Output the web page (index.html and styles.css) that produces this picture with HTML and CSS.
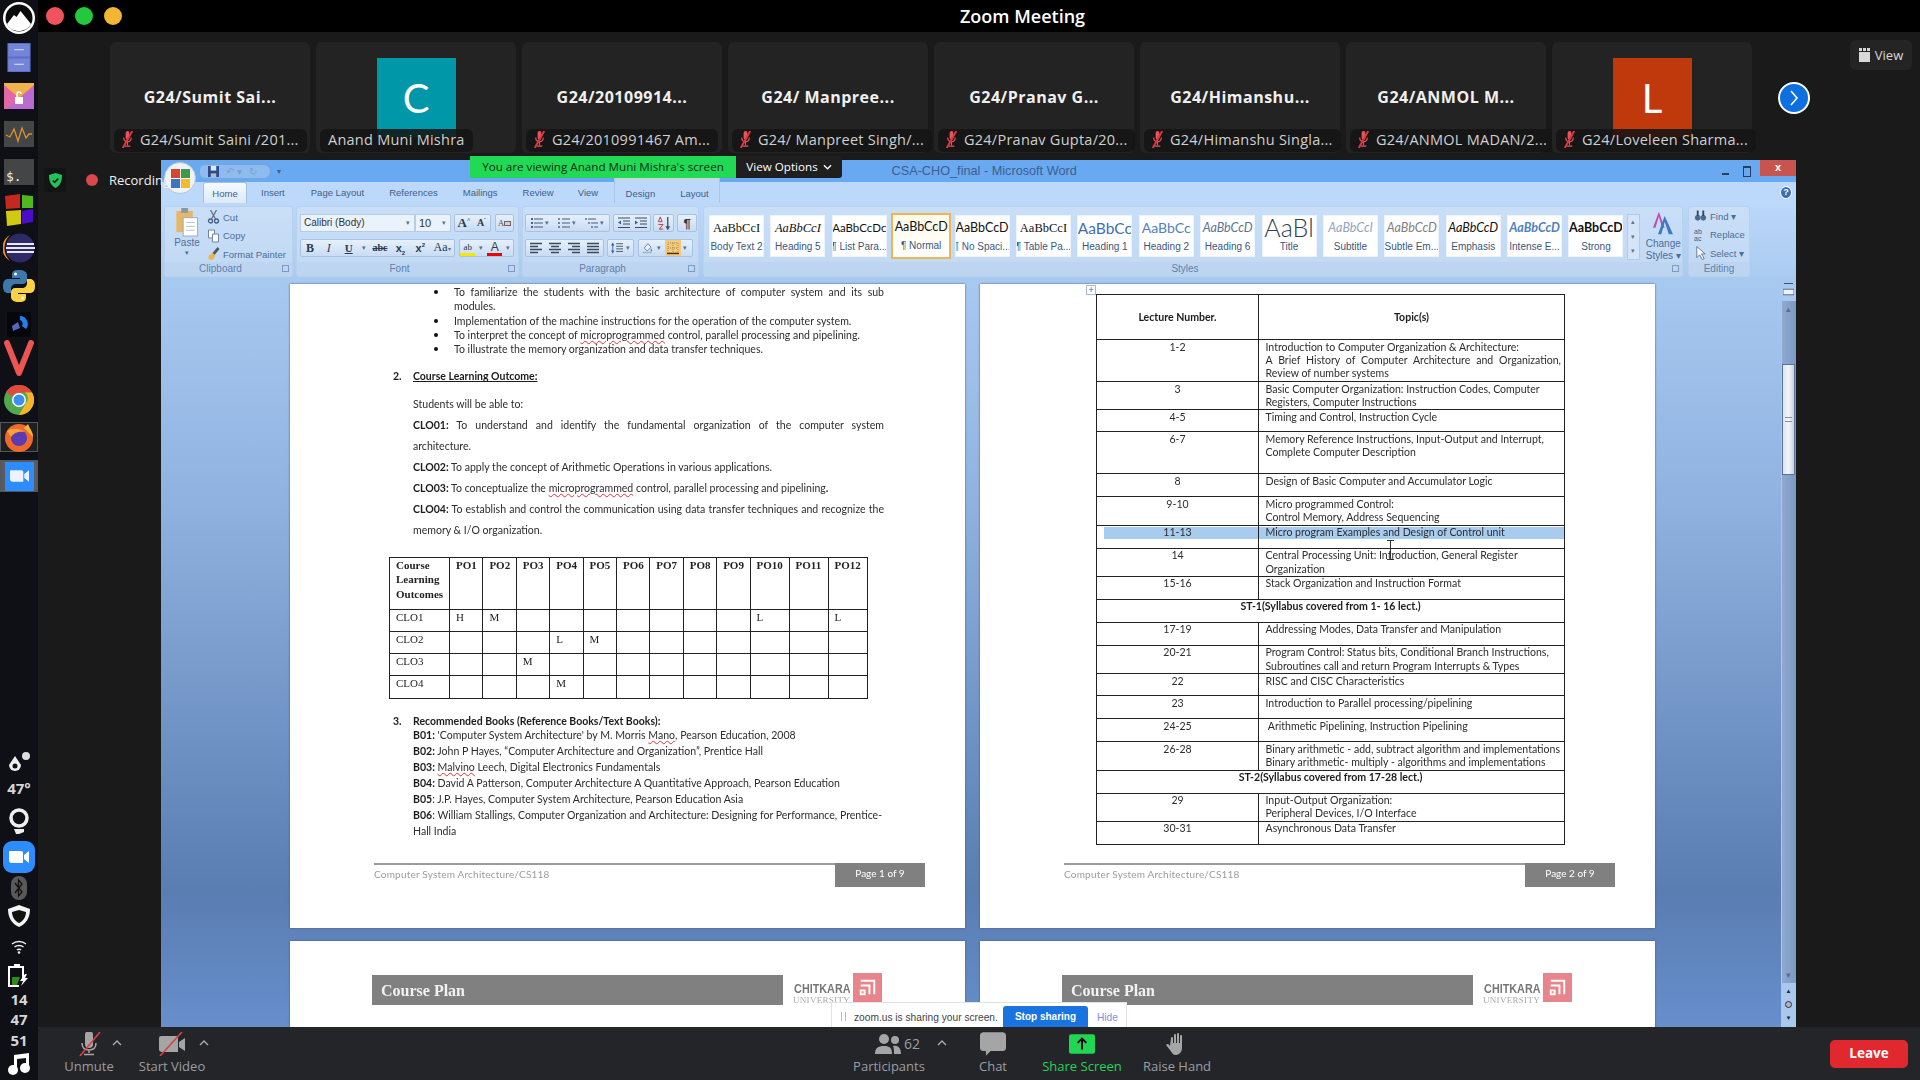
FILE: index.html
```html
<!DOCTYPE html>
<html lang="en">
<head>
<meta charset="utf-8">
<title>Zoom Meeting</title>
<link rel="stylesheet" href="styles.css">
</head>
<body>
<svg class="defs" width="0" height="0" aria-hidden="true">
  <symbol id="mutemic" viewBox="0 0 14 18"><path d="M5 2a2 2 0 0 1 4 0v5a2 2 0 0 1-4 0z" fill="#e2555c"/><path d="M3 7c0 3 1.500 4.500 4 4.500S11 10 11 7M7 11.500V15M4 16h6" fill="none" stroke="#e2555c" stroke-width="1.200"/><path d="M12 0 2 18" stroke="#e8353e" stroke-width="2"/></symbol>
  <symbol id="ulist" viewBox="0 0 14 12"><path d="M4 2h9M4 6h9M4 10h9" stroke="#4a5a70"/><path d="M1 1h2v2H1zM1 5h2v2H1zM1 9h2v2H1z" fill="#3a64a0"/></symbol>
  <symbol id="olist" viewBox="0 0 14 12"><path d="M5 2h8M5 6h8M5 10h8" stroke="#4a5a70"/><path d="M2 1v2M1 6h2M1 10h2" stroke="#3a64a0" stroke-width="1.400"/></symbol>
  <symbol id="mlist" viewBox="0 0 14 12"><path d="M3 2h8M6 6h7M9 10h4" stroke="#4a5a70"/><path d="M1 1v2M4 5v2M7 9v2" stroke="#3a64a0" stroke-width="1.300"/></symbol>
  <symbol id="indent" viewBox="0 0 14 12"><path d="M1 1h12M6 4h7M6 7h7M1 10.500h12" stroke="#3d4a5e"/><path d="M1 3.500 4 5.500 1 7.500z" fill="#2d5ea8"/></symbol>
  <symbol id="outdent" viewBox="0 0 14 12"><path d="M1 1h12M6 4h7M6 7h7M1 10.500h12" stroke="#3d4a5e"/><path d="M4 3.500 1 5.500 4 7.500z" fill="#2d5ea8"/></symbol>
  <symbol id="sort" viewBox="0 0 14 16"><path d="M11 1v13" stroke="#3d4a5e" stroke-width="1.400"/><path d="M8.500 11 11 15l2.500-4z" fill="#3d4a5e"/><path d="M3 1 1 6h4zM1 9h5L2 14h4" fill="none" stroke="#b23a3a"/></symbol>
  <symbol id="left" viewBox="0 0 14 12"><path d="M1 1.500h12M1 4.500h8M1 7.500h12M1 10.500h8" stroke="#3d4a5e" stroke-width="1.300"/></symbol>
  <symbol id="center" viewBox="0 0 14 12"><path d="M1 1.500h12M3 4.500h8M1 7.500h12M3 10.500h8" stroke="#3d4a5e" stroke-width="1.300"/></symbol>
  <symbol id="right" viewBox="0 0 14 12"><path d="M1 1.500h12M5 4.500h8M1 7.500h12M5 10.500h8" stroke="#3d4a5e" stroke-width="1.300"/></symbol>
  <symbol id="justify" viewBox="0 0 14 12"><path d="M1 1.500h12M1 4.500h12M1 7.500h12M1 10.500h12" stroke="#3d4a5e" stroke-width="1.300"/></symbol>
  <symbol id="spacing" viewBox="0 0 16 14"><path d="M7 2h8M7 5h8M7 8h8M7 11h8" stroke="#3d4a5e"/><path d="M3 1v12" stroke="#2d5ea8"/><path d="m1 4 2-3 2 3zM1 10l2 3 2-3z" fill="#2d5ea8"/></symbol>
  <symbol id="shade" viewBox="0 0 16 16"><path d="M8 2 3 8l4 4 5-5z" fill="#eef3f8" stroke="#55697f"/><path d="M12 8c1 2 2 3 1.500 4s-2 .5-2-.5z" fill="#4a86c8"/><path d="M1 14h12" stroke="#9eb3c8" stroke-width="2"/></symbol>
  <symbol id="border" viewBox="0 0 16 16"><path d="M0 0h16v16H0z" fill="#f7c877"/><path d="M3 3h10v10H3z" fill="none" stroke="#a0894f" stroke-dasharray="1 1"/><path d="M8 3v10M3 8h10" stroke="#a0894f" stroke-dasharray="1 1"/><path d="M2 13.500h12" stroke="#333" stroke-width="1.300"/></symbol>
  <symbol id="chev" viewBox="0 0 10 6"><path d="m1 5 4-4 4 4" fill="none" stroke="#a9abaf" stroke-width="1.400"/></symbol>
  <symbol id="logotile" viewBox="0 0 30 30"><path d="M0 0h30v30H0z" fill="#e8848c"/><path d="M8 8h14v14M8 13h9v9M8 18h4v4H8z" fill="none" stroke="#fff" stroke-width="2"/></symbol>
</svg>

<div class="screen">
  <nav class="dock">
    <svg class="dk dk-logo" viewBox="0 0 32 32"><circle cx="16" cy="16" r="16" fill="#fff"/><circle cx="16" cy="16" r="13.500" fill="#0a0a0a"/><path d="M4 22 11 13l2.500 2 4-6L28 22c-3 5-7.500 7-12 7S6 27 4 22z" fill="#fff"/></svg>
    <svg class="dk dk-files" viewBox="0 0 24 30"><path d="M0 0h24v30H0z" fill="#5d6cc4"/><path d="M1 1h22v13H1zM1 16h22v13H1z" fill="#7484d6"/><path d="M7 7h10M7 22h10" stroke="#dfe4f7" stroke-width="1.200"/></svg>
    <svg class="dk dk-mail" viewBox="0 0 30 26"><path d="M0 0h30v26H0z" fill="#f0b24b"/><path d="M0 2 15 15 30 2v24H0z" fill="#e367a6"/><path d="M30 4v22H2z" fill="#b96bd0"/><path d="M11 14h8v7h-8z" fill="#fff"/><path d="M13 14v-3a2 2 0 0 1 4 0" fill="none" stroke="#fff" stroke-width="1.500"/></svg>
    <svg class="dk dk-mon" viewBox="0 0 30 26"><path d="M0 0h30v26H0z" fill="#434547"/><path d="M2 14 6 16 10 8l4 12 4-13 4 10 3-4h3" fill="none" stroke="#d9912f" stroke-width="1.300"/></svg>
    <div class="dk-term">$.</div>
    <svg class="dk dk-win" viewBox="0 0 30 32"><path d="M1 2 16 0v14L2 15z" fill="#c7281d"/><path d="m18 1 11 1v12H18z" fill="#4fb81f"/><path d="m2 17 15-1v14L3 32z" fill="#d2ca12"/><path d="m18 17 11-2v13l-11 2z" fill="#4a0ec8"/></svg>
    <svg class="dk dk-round" viewBox="0 0 32 32"><circle cx="17" cy="16" r="14.500" fill="#2d2a66"/><path d="M7 3A15 15 0 0 0 7 29 18 18 0 0 1 7 3z" fill="#f0901e"/><path d="M4 12h27M3 16h29M4 20h27" stroke="#e9e8f3" stroke-width="1.800"/></svg>
    <svg class="dk dk-py" viewBox="0 0 32 32"><path d="M16 0c-6 0-7 2-7 5v3h8v1H5c-3 0-5 2-5 7s2 7 5 7h3v-4c0-3 2-5 5-5h7c2 0 4-2 4-4V5c0-3-3-5-8-5z" fill="#3c78aa"/><path d="M16 32c6 0 7-2 7-5v-3h-8v-1h12c3 0 5-2 5-7s-2-7-5-7h-3v4c0 3-2 5-5 5h-7c-2 0-4 2-4 4v5c0 3 3 5 8 5z" fill="#fed142"/><circle cx="12.500" cy="4" r="1.500" fill="#fff"/><circle cx="19.500" cy="28" r="1.500" fill="#fff"/></svg>
    <svg class="dk dk-blk" viewBox="0 0 24 25"><path d="M0 0h24v25H0z" fill="#05070c"/><path d="M13 4a8 8 0 0 1 6 13l-4-3a4 4 0 0 0-2-6z" fill="#1d83ec"/><path d="m5 14 6-4 2 6-7 3z" fill="#4f6bc0"/></svg>
    <svg class="dk dk-viv" viewBox="0 0 30 37"><path d="M3 3 15 33 27 3" fill="none" stroke="#ec5552" stroke-width="6" stroke-linecap="round" stroke-linejoin="round"/></svg>
    <svg class="dk dk-chrome" viewBox="0 0 30 30"><circle cx="15" cy="15" r="15" fill="#53a84d"/><path d="M15 0a15 15 0 0 1 13 7.500H15a7.500 7.500 0 0 0-6.500 3.750L2 7A15 15 0 0 1 15 0z" fill="#e2493c"/><path d="M28 7.500A15 15 0 0 1 15 30l6.500-11.250A7.500 7.500 0 0 0 21 7.500z" fill="#f7b32b"/><circle cx="15" cy="15" r="7" fill="#fff"/><circle cx="15" cy="15" r="5.500" fill="#3e8ef0"/></svg>
    <div class="dk-box dk-box-ff"><svg class="dk-ff" viewBox="0 0 30 30"><circle cx="15" cy="16" r="14" fill="#ee6a2a"/><path d="M24 2c2 5 5 8 5 13L20 6z" fill="#f9b233"/><circle cx="15" cy="16" r="8" fill="#5a3bb0"/><path d="M3 9c5-3 12-3 18 1-5-1-11 0-14 5z" fill="#f7a23a"/></svg></div>
    <div class="dk-box dk-box-zm"><div class="zm-square"><svg class="zm-cam" viewBox="0 0 20 12"><path d="M1 0h11a2 2 0 0 1 2 2v10H3a3 3 0 0 1-3-3V1a1 1 0 0 1 1-1z" fill="#eef3fb"/><path d="m15 4 5-4v12l-5-4z" fill="#eef3fb"/></svg></div></div>
    <div class="dock-fill"></div>
    <svg class="dk dk-drop" viewBox="0 0 26 24"><path d="M9 6 15 15a6 6 0 1 1-12 0z" fill="#eee"/><circle cx="9" cy="16" r="2.500" fill="#111"/><circle cx="20" cy="6" r="4" fill="#ddd"/></svg>
    <div class="dk-txt">47°</div>
    <svg class="dk dk-bulb" viewBox="0 0 22 28"><circle cx="11" cy="10" r="8" fill="none" stroke="#eee" stroke-width="3.500"/><path d="M6 21h10v3l-5 2H8z" fill="#eee"/></svg>
    <div class="zm-tray"><svg class="zm-cam zm-cam2" viewBox="0 0 20 12"><path d="M1 0h11a2 2 0 0 1 2 2v10H3a3 3 0 0 1-3-3V1a1 1 0 0 1 1-1z" fill="#fff"/><path d="m15 4 5-4v12l-5-4z" fill="#fff"/></svg></div>
    <div class="bt"><svg class="bt-ic" viewBox="0 0 10 20"><path d="M1 5 8 14 4.500 18V2L8 6 1 15" fill="none" stroke="#111" stroke-width="1.300"/></svg></div>
    <svg class="dk dk-shield" viewBox="0 0 24 24"><path d="M12 1 23 5c0 9-4 15-11 18C5 20 1 14 1 5z" fill="#f4f4f4"/><path d="M12 6 19 8c0 5-3 9-7 11-4-2-7-6-7-11z" fill="#111"/></svg>
    <svg class="dk dk-wifi" viewBox="0 0 16 14"><path d="M1 4c4-3.500 10-3.500 14 0M3.500 7c2.500-2 6.500-2 9 0M6 10c1-1 3-1 4 0" fill="none" stroke="#eee" stroke-width="1.500"/><circle cx="8" cy="12.500" r="1.300" fill="#eee"/></svg>
    <svg class="dk dk-bat" viewBox="0 0 22 24"><path d="M6 0h6v2h4v13h-2V4H2v17h9v2H0V2h6z" fill="#fff"/><path d="M4 13h8l-3 8H4z" fill="#2f8a1e"/><path d="M17 10l-5 7h3l-2 5 7-8h-3l2-4z" fill="#fff"/></svg>
    <div class="dk-txt dk-clock"><span>14</span><span>47</span><span>51</span></div>
    <svg class="dk dk-music" viewBox="0 0 24 22"><path d="M7 2 22 0v15h-3V5L10 6v11H7z" fill="#fff"/><circle cx="6" cy="17" r="5" fill="#fff"/><circle cx="18" cy="15" r="5" fill="#fff"/></svg>
  </nav>

  <main class="zoom">
    <header class="titlebar">
      <span class="dot dot-r"></span><span class="dot dot-g"></span><span class="dot dot-y"></span>
      <h1 class="title">Zoom Meeting</h1>
    </header>

    <section class="gallery">
      <div class="tile"><span class="tile-name">G24/Sumit Sai...</span><div class="pill"><svg class="pill-mic"><use href="#mutemic"/></svg><span>G24/Sumit Saini /201...</span></div></div>
      <div class="tile"><div class="avatar av-c">C</div><div class="pill"><span>Anand Muni Mishra</span></div></div>
      <div class="tile"><span class="tile-name">G24/20109914...</span><div class="pill"><svg class="pill-mic"><use href="#mutemic"/></svg><span>G24/2010991467 Am...</span></div></div>
      <div class="tile"><span class="tile-name">G24/ Manpree...</span><div class="pill"><svg class="pill-mic"><use href="#mutemic"/></svg><span>G24/ Manpreet Singh/...</span></div></div>
      <div class="tile"><span class="tile-name">G24/Pranav G...</span><div class="pill"><svg class="pill-mic"><use href="#mutemic"/></svg><span>G24/Pranav Gupta/20...</span></div></div>
      <div class="tile"><span class="tile-name">G24/Himanshu...</span><div class="pill"><svg class="pill-mic"><use href="#mutemic"/></svg><span>G24/Himanshu Singla...</span></div></div>
      <div class="tile"><span class="tile-name">G24/ANMOL M...</span><div class="pill"><svg class="pill-mic"><use href="#mutemic"/></svg><span>G24/ANMOL MADAN/2...</span></div></div>
      <div class="tile"><div class="avatar av-l">L</div><div class="pill"><svg class="pill-mic"><use href="#mutemic"/></svg><span>G24/Loveleen Sharma...</span></div></div>
      <div class="next"><svg class="next-ic" viewBox="0 0 10 18"><path d="m2 2 6 7-6 7" fill="none" stroke="#fff" stroke-width="1.600"/></svg></div>
      <div class="viewbtn"><svg class="view-ic" viewBox="0 0 11 14"><path d="M0 0h3v3H0zM4 0h3v3H4zM8 0h3v3H8zM0 4h11v10H0z" fill="#d8d8d8"/></svg><span>View</span></div>
    </section>

    <section class="stage">
      <div class="rec"><span class="rec-shield"><svg class="rec-sh" viewBox="0 0 14 16"><path d="M7 0 14 2c0 7-2 11-7 14C2 13 0 9 0 2z" fill="#21c45a"/><path d="m4 8 2 2 4-4" fill="none" stroke="#0c1a10" stroke-width="1.600"/></svg></span><span class="rec-dot"></span><span class="rec-t">Recording</span></div>
      <div class="banner"><span class="banner-msg">You are viewing Anand Muni Mishra's screen</span><span class="banner-opt">View Options <svg class="banner-ch" viewBox="0 0 10 6"><path d="m1 1 4 4 4-4" fill="none" stroke="#fff" stroke-width="1.400"/></svg></span></div>

      <div class="word">
        <div class="w-title">
          <div class="orb"><span class="orb-q q1"></span><span class="orb-q q2"></span><span class="orb-q q3"></span><span class="orb-q q4"></span></div>
          <div class="qat">
            <svg class="qat-save" viewBox="0 0 12 12"><path d="M0 0h12v12H0z" fill="#2c4a8c"/><path d="M3 0h6v5H3z" fill="#dfe8f5"/><path d="M3 8h6v4H3z" fill="#aebbd0"/></svg>
            <span class="qat-dim">↶ ▾</span><span class="qat-dim">↻</span>
          </div>
          <span class="qat-more">▾</span>
          <span class="w-name">CSA-CHO_final - Microsoft Word</span>
          <span class="w-min"></span><span class="w-max"></span><span class="w-close">x</span>
        </div>
        <div class="w-tabs">
          <span class="tab tab-on">Home</span><span class="tab t-ins">Insert</span><span class="tab t-pl">Page Layout</span><span class="tab t-ref">References</span><span class="tab t-mail">Mailings</span><span class="tab t-rev">Review</span><span class="tab t-view">View</span>
          <span class="ctx"><span class="tab">Design</span><span class="tab">Layout</span></span>
          <span class="help">?</span>
        </div>
        <div class="ribbon">
          <div class="grp g-clip">
            <div class="grp-body clip">
              <div class="paste"><svg class="paste-ic" viewBox="0 0 24 30"><path d="M1 3h17v22H1z" fill="#e7b765"/><path d="M6 0h7v5H6z" fill="#8a97a8"/><path d="M8 10h15v19H8z" fill="#fff" stroke="#9aa8ba"/><path d="M11 15h9M11 19h9M11 23h9" stroke="#b7c3d2"/></svg><span class="paste-t">Paste</span><span class="paste-a">▾</span></div>
              <div class="clip-list">
                <div class="ci"><svg class="ci-ic" viewBox="0 0 12 14"><path d="M3 0l5 9M9 0 4 9" stroke="#667" stroke-width="1.200"/><circle cx="3" cy="11" r="2" fill="none" stroke="#44608c" stroke-width="1.300"/><circle cx="9" cy="11" r="2" fill="none" stroke="#44608c" stroke-width="1.300"/></svg>Cut</div>
                <div class="ci"><svg class="ci-ic" viewBox="0 0 12 14"><path d="M1 1h6v8H1z" fill="#fff" stroke="#6f85a3"/><path d="M5 5h6v8H5z" fill="#fff" stroke="#6f85a3"/></svg>Copy</div>
                <div class="ci"><svg class="ci-ic" viewBox="0 0 12 14"><path d="M5 6 10 0l2 2-5 6z" fill="#555"/><path d="M1 9l4-3 3 3-3 4-4-1z" fill="#e4b94e"/></svg>Format Painter</div>
              </div>
            </div>
            <div class="grp-label">Clipboard<i class="launch"></i></div>
          </div>

          <div class="grp g-font">
            <div class="grp-body tworow">
              <div class="row">
                <span class="combo c-font">Calibri (Body)<b>▾</b></span><span class="combo c-size">10<b>▾</b></span>
                <span class="set s-grow"><span class="gl gl-a">A<sup>^</sup></span><span class="gl gl-a2">A<sup>ˇ</sup></span></span>
                <span class="set s-clear"><span class="gl gl-clear">A<i></i></span></span>
              </div>
              <div class="row">
                <span class="set s-fmt"><span class="gl gl-b">B</span><span class="gl gl-i">I</span><span class="gl gl-u">U</span><span class="gl gl-ar">▾</span><span class="gl gl-s">abc</span><span class="gl gl-x">x<sub>2</sub></span><span class="gl gl-x">x<sup>2</sup></span><span class="gl gl-aa">Aa<small>▾</small></span></span>
                <span class="set s-col"><span class="gl gl-hi">ab</span><span class="gl gl-ar">▾</span><span class="gl gl-fc">A</span><span class="gl gl-ar">▾</span></span>
              </div>
            </div>
            <div class="grp-label">Font<i class="launch"></i></div>
          </div>

          <div class="grp g-para">
            <div class="grp-body tworow">
              <div class="row">
                <span class="set s-list"><svg class="ic"><use href="#ulist"/></svg><b class="ar">▾</b><svg class="ic"><use href="#olist"/></svg><b class="ar">▾</b><svg class="ic"><use href="#mlist"/></svg><b class="ar">▾</b></span>
                <span class="set s-ind"><svg class="ic"><use href="#outdent"/></svg><svg class="ic"><use href="#indent"/></svg></span>
                <span class="set s-one"><svg class="ic"><use href="#sort"/></svg></span>
                <span class="set s-one s-pil"><span class="pil">¶</span></span>
              </div>
              <div class="row">
                <span class="set s-al"><svg class="ic"><use href="#left"/></svg><svg class="ic"><use href="#center"/></svg><svg class="ic"><use href="#right"/></svg><svg class="ic"><use href="#justify"/></svg></span>
                <span class="set s-ls"><svg class="ic"><use href="#spacing"/></svg><b class="ar">▾</b></span>
                <span class="set s-bd"><svg class="ic"><use href="#shade"/></svg><b class="ar">▾</b><svg class="ic ic-hot"><use href="#border"/></svg><b class="ar">▾</b></span>
              </div>
            </div>
            <div class="grp-label">Paragraph<i class="launch"></i></div>
          </div>

          <div class="grp g-styles">
            <div class="grp-body styles">
              <div class="st"><span class="sm sm-serif">AaBbCcI</span><span class="sn">Body Text 2</span></div>
              <div class="st"><span class="sm sm-serif sm-it">AaBbCcI</span><span class="sn">Heading 5</span></div>
              <div class="st"><span class="sm sm-nar">AaBbCcDc</span><span class="sn">¶ List Para...</span></div>
              <div class="st st-on"><span class="sm">AaBbCcD</span><span class="sn">¶ Normal</span></div>
              <div class="st"><span class="sm">AaBbCcD</span><span class="sn">¶ No Spaci...</span></div>
              <div class="st"><span class="sm sm-serif">AaBbCcI</span><span class="sn">¶ Table Pa...</span></div>
              <div class="st"><span class="sm sm-h1">AaBbCc</span><span class="sn">Heading 1</span></div>
              <div class="st"><span class="sm sm-h2">AaBbCc</span><span class="sn">Heading 2</span></div>
              <div class="st"><span class="sm sm-h6">AaBbCcD</span><span class="sn">Heading 6</span></div>
              <div class="st"><span class="sm sm-title">AaBl</span><span class="sn">Title</span></div>
              <div class="st"><span class="sm sm-sub">AaBbCcl</span><span class="sn">Subtitle</span></div>
              <div class="st"><span class="sm sm-se">AaBbCcD</span><span class="sn">Subtle Em...</span></div>
              <div class="st"><span class="sm sm-em">AaBbCcD</span><span class="sn">Emphasis</span></div>
              <div class="st"><span class="sm sm-ie">AaBbCcD</span><span class="sn">Intense E...</span></div>
              <div class="st"><span class="sm sm-str">AaBbCcD</span><span class="sn">Strong</span></div>
              <div class="gal-sb"><span>▴</span><span>▾</span><span>▾</span></div>
              <div class="chg"><svg class="chg-ic" viewBox="0 0 28 30"><path d="M9 1 2 20h3l4-13 4 13h3z" fill="#c04fa8"/><path d="M16 6 8 28h4l4-15 5 15h5z" fill="#3d7ac2"/></svg><span>Change</span><span>Styles ▾</span></div>
            </div>
            <div class="grp-label">Styles<i class="launch"></i></div>
          </div>

          <div class="grp g-edit">
            <div class="grp-body edit">
              <div class="ci"><svg class="ci-ic" viewBox="0 0 14 14"><circle cx="4" cy="9" r="3" fill="#4b6a94"/><circle cx="10" cy="9" r="3" fill="#4b6a94"/><path d="M3 1h2v6H3zM9 1h2v6H9z" fill="#33465f"/></svg>Find ▾</div>
              <div class="ci"><span class="rep">ab<br>ac</span>Replace</div>
              <div class="ci"><svg class="ci-ic" viewBox="0 0 14 14"><path d="M3 0v12l3-3 3 5 2-1-3-5h4z" fill="#fff" stroke="#5d7593"/></svg>Select ▾</div>
            </div>
            <div class="grp-label">Editing</div>
          </div>
        </div>

        <div class="docarea">
          <div class="pages">
            <article class="page page-1">
              <ul class="bul">
                <li class="jst">To familiarize the students with the basic architecture of computer system and its sub modules.</li>
                <li>Implementation of the machine instructions for the operation of the computer system.</li>
                <li>To interpret the concept of <span class="sp">microprogrammed</span> control, parallel processing and pipelining.</li>
                <li>To illustrate the memory organization and data transfer techniques.</li>
              </ul>
              <h2 class="hd hd-u"><span class="hd-n">2.</span><u>Course Learning Outcome:</u></h2>
              <div class="clo">
                <p>Students will be able to:</p>
                <p class="jst"><b>CLO01:</b> To understand and identify the fundamental organization of the computer system architecture.</p>
                <p><b>CLO02:</b> To apply the concept of Arithmetic Operations in various applications.</p>
                <p><b>CLO03:</b> To conceptualize the <span class="sp">microprogrammed</span> control, parallel processing and pipelining<b>.</b></p>
                <p class="jst"><b>CLO04:</b> To establish and control the communication using data transfer techniques and recognize the memory &amp; I/O organization.</p>
              </div>
              <table class="mat">
                <colgroup><col class="m0"><col class="m1"><col class="m1"><col class="m1"><col class="m1"><col class="m1"><col class="m1"><col class="m1"><col class="m1"><col class="m1"><col class="m2"><col class="m2"><col class="m2"></colgroup>
                <tr class="mh"><th>Course Learning Outcomes</th><th>PO1</th><th>PO2</th><th>PO3</th><th>PO4</th><th>PO5</th><th>PO6</th><th>PO7</th><th>PO8</th><th>PO9</th><th>PO10</th><th>PO11</th><th>PO12</th></tr>
                <tr class="mr"><td>CLO1</td><td>H</td><td>M</td><td></td><td></td><td></td><td></td><td></td><td></td><td></td><td>L</td><td></td><td>L</td></tr>
                <tr class="mr"><td>CLO2</td><td></td><td></td><td></td><td>L</td><td>M</td><td></td><td></td><td></td><td></td><td></td><td></td><td></td></tr>
                <tr class="mr"><td>CLO3</td><td></td><td></td><td>M</td><td></td><td></td><td></td><td></td><td></td><td></td><td></td><td></td><td></td></tr>
                <tr class="mr"><td>CLO4</td><td></td><td></td><td></td><td>M</td><td></td><td></td><td></td><td></td><td></td><td></td><td></td><td></td></tr>
              </table>
              <h2 class="hd hd-b"><span class="hd-n">3.</span>Recommended Books (Reference Books/Text Books):</h2>
              <div class="books">
                <p><b>B01:</b> 'Computer System Architecture' by M. Morris <span class="sp">Mano</span>, Pearson Education, 2008</p>
                <p><b>B02:</b> John P Hayes, “Computer Architecture and Organization”, Prentice Hall</p>
                <p><b>B03:</b> <span class="sp">Malvino</span> Leech, Digital Electronics Fundamentals</p>
                <p><b>B04:</b> David A Patterson, Computer Architecture A Quantitative Approach, Pearson Education</p>
                <p><b>B05</b>: J.P. Hayes, Computer System Architecture, Pearson Education Asia</p>
                <p><b>B06</b>: William Stallings, Computer Organization and Architecture: Designing for Performance, Prentice-Hall India</p>
              </div>
              <footer class="pf"><span class="pf-t">Computer System Architecture/CS118</span><span class="pf-n">Page 1 of 9</span></footer>
            </article>

            <article class="page page-2">
              <span class="move">+</span>
              <table class="lec">
                <colgroup><col class="l0"><col class="l1"></colgroup>
                <tr class="h45 lh"><th>Lecture Number.</th><th>Topic(s)</th></tr>
                <tr class="h42"><td>1-2</td><td class="jst2">Introduction to Computer Organization &amp; Architecture:<br><span class="jline">A Brief History of Computer Architecture and Organization,</span><br>Review of number systems</td></tr>
                <tr class="h28"><td>3</td><td>Basic Computer Organization: Instruction Codes, Computer<br>Registers, Computer Instructions</td></tr>
                <tr class="h22"><td>4-5</td><td>Timing and Control, Instruction Cycle</td></tr>
                <tr class="h42"><td>6-7</td><td>Memory Reference Instructions, Input-Output and Interrupt,<br>Complete Computer Description</td></tr>
                <tr class="h23"><td>8</td><td>Design of Basic Computer and Accumulator Logic</td></tr>
                <tr class="h28"><td>9-10</td><td>Micro programmed Control:<br>Control Memory, Address Sequencing</td></tr>
                <tr class="h23 sel"><td>11-13</td><td>Micro program Examples and Design of Control unit</td></tr>
                <tr class="h28"><td>14</td><td>Central Processing Unit: Introduction, General Register<br>Organization</td></tr>
                <tr class="h23"><td>15-16</td><td>Stack Organization and Instruction Format</td></tr>
                <tr class="h23"><th colspan="2">ST-1(Syllabus covered from 1- 16 lect.)</th></tr>
                <tr class="h23"><td>17-19</td><td>Addressing Modes, Data Transfer and Manipulation</td></tr>
                <tr class="h28"><td>20-21</td><td>Program Control: Status bits, Conditional Branch Instructions,<br>Subroutines call and return Program Interrupts &amp; Types</td></tr>
                <tr class="h22"><td>22</td><td>RISC and CISC Characteristics</td></tr>
                <tr class="h23"><td>23</td><td>Introduction to Parallel processing/pipelining</td></tr>
                <tr class="h23"><td>24-25</td><td>&nbsp;Arithmetic Pipelining, Instruction Pipelining</td></tr>
                <tr class="h28"><td>26-28</td><td>Binary arithmetic - add, subtract algorithm and implementations<br>Binary arithmetic- multiply - algorithms and implementations</td></tr>
                <tr class="h23"><th colspan="2">ST-2(Syllabus covered from 17-28 lect.)</th></tr>
                <tr class="h28"><td>29</td><td>Input-Output Organization:<br>Peripheral Devices, I/O Interface</td></tr>
                <tr class="h23"><td>30-31</td><td>Asynchronous Data Transfer</td></tr>
              </table>
              <span class="ibeam"></span>
              <footer class="pf"><span class="pf-t">Computer System Architecture/CS118</span><span class="pf-n">Page 2 of 9</span></footer>
            </article>

            <article class="page page-n">
              <div class="cp"><span class="cp-t">Course Plan</span></div>
              <div class="ck"><span class="ck-t"><b>CHITKARA</b><i>UNIVERSITY</i></span><svg class="ck-ic"><use href="#logotile"/></svg></div>
            </article>
            <article class="page page-n">
              <div class="cp"><span class="cp-t">Course Plan</span></div>
              <div class="ck"><span class="ck-t"><b>CHITKARA</b><i>UNIVERSITY</i></span><svg class="ck-ic"><use href="#logotile"/></svg></div>
            </article>
          </div>
          <div class="vscroll">
            <span class="vs-split"></span>
            <svg class="vs-rul" viewBox="0 0 12 8"><path d="M0 1h12v6H0z" fill="#eef3fa" stroke="#51667f"/></svg>
            <div class="vs-track">
              <span class="vs-up">▴</span>
              <span class="vs-thumb"><i></i></span>
              <span class="vs-grow"></span>
              <span class="vs-up">▾</span>
            </div>
            <div class="vs-nav"><span class="nv">▲</span><span class="nv nv-o"></span><span class="nv">▼</span></div>
          </div>
        </div>
      </div>

      <div class="sharebar"><span class="sb-pause"></span><span class="sb-msg">zoom.us is sharing your screen.</span><span class="sb-stop">Stop sharing</span><span class="sb-hide">Hide</span></div>
    </section>

    <footer class="toolbar">
      <div class="tool t-unmute"><svg class="t-ic" viewBox="0 0 24 24"><path d="M8 3a4 4 0 0 1 8 0v9a4 4 0 0 1-8 0z" fill="#a5a5a5"/><path d="M5 11c0 5 3 7 7 7s7-2 7-7M12 18v3M7 22.500h10" fill="none" stroke="#a5a5a5" stroke-width="1.500"/><path d="M23 0 3 24" stroke="#d9414a" stroke-width="1.600"/></svg><span>Unmute</span><svg class="t-ch"><use href="#chev"/></svg></div>
      <div class="tool t-video"><svg class="t-ic t-ic-w" viewBox="0 0 26 24"><path d="M2 4h15a2 2 0 0 1 2 2v14H3a3 3 0 0 1-3-3V6a2 2 0 0 1 2-2z" fill="#a5a5a5"/><path d="m20 10 6-4v13l-6-4z" fill="#a5a5a5"/><path d="M23 0 1 24" stroke="#d9414a" stroke-width="1.600"/></svg><span>Start Video</span><svg class="t-ch t-ch-v"><use href="#chev"/></svg></div>
      <div class="tool t-part"><svg class="t-ic t-ic-w" viewBox="0 0 26 20"><circle cx="9" cy="5" r="5" fill="#a5a5a5"/><circle cx="20" cy="6" r="4" fill="#a5a5a5"/><path d="M0 20c0-6 3-8 9-8s8 2 8 8z" fill="#a5a5a5"/><path d="M18 12c4-1 8 1 8 8h-7c0-3 0-6-1-8z" fill="#a5a5a5"/></svg><span class="cnt">62</span><span>Participants</span><svg class="t-ch t-ch-p"><use href="#chev"/></svg></div>
      <div class="tool t-chat"><svg class="t-ic t-ic-w" viewBox="0 0 22 20"><path d="M3 0h16a3 3 0 0 1 3 3v10a3 3 0 0 1-3 3H9l-4 4v-4H3a3 3 0 0 1-3-3V3a3 3 0 0 1 3-3z" fill="#a5a5a5"/></svg><span>Chat</span></div>
      <div class="tool t-share"><svg class="t-ic t-ic-w" viewBox="0 0 24 18"><rect width="24" height="18" rx="2" fill="#21d653"/><path d="M12 4v10M8 8l4-4 4 4" fill="none" stroke="#101" stroke-width="1.800"/></svg><span>Share Screen</span></div>
      <div class="tool t-hand"><svg class="t-ic" viewBox="0 0 20 24"><path d="M4 6a1 1 0 0 1 2 0v5h1V3a1 1 0 0 1 2 0v8h1V2a1 1 0 0 1 2 0v9h1V4a1 1 0 0 1 2 0v12c0 4-3 7-6 7s-4-2-6-5l-4-5c1-2 3-1 4 1z" fill="#a5a5a5"/></svg><span>Raise Hand</span></div>
      <div class="leave">Leave</div>
    </footer>
  </main>
</div>
</body>
</html>
```

FILE: styles.css
```css
* { box-sizing: border-box; }
html, body { margin: 0; padding: 0; }
body { width: 1920px; height: 1080px; overflow: hidden; background: #1a1a1a; font-family: "Open Sans", "Liberation Sans", sans-serif; }
.defs { position: absolute; }
.screen { display: flex; width: 1920px; height: 1080px; }

/* dock */
.dock { width: 38px; height: 1080px; background: #0e1016; display: flex; flex-direction: column; align-items: center; padding-top: 2px; }
.dk { display: block; flex: none; }
.dk-logo { width: 32px; height: 32px; }
.dk-files { width: 24px; height: 29px; margin-top: 9px; }
.dk-mail { width: 30px; height: 26px; margin-top: 11px; }
.dk-mon { width: 30px; height: 26px; margin-top: 12px; }
.dk-term { width: 30px; height: 26px; margin-top: 12px; background: #434547; color: #eee; font-family: "DejaVu Sans Mono", monospace; font-size: 13px; line-height: 16px; padding: 10px 0 0 2px; flex: none; }
.dk-win { width: 30px; height: 32px; margin-top: 9px; }
.dk-round { width: 32px; height: 32px; margin-top: 6px; }
.dk-py { width: 32px; height: 32px; margin-top: 6px; }
.dk-blk { width: 24px; height: 25px; margin-top: 10px; }
.dk-viv { width: 30px; height: 37px; margin-top: 3px; }
.dk-chrome { width: 30px; height: 30px; margin-top: 8px; }
.dk-box { width: 38px; display: flex; align-items: center; justify-content: center; border: 1px solid #54575c; background: #1d1f22; }
.dk-box-ff { height: 30px; margin-top: 7px; }
.dk-ff { width: 30px; height: 30px; }
.dk-box-zm { height: 32px; margin-top: 8px; background: #585b60; }
.zm-square { width: 29px; height: 29px; background: #2d8cff; display: flex; align-items: center; justify-content: center; }
.zm-cam { width: 19px; height: 12px; }
.dock-fill { flex: 1; }
.dk-drop { width: 26px; height: 24px; margin-bottom: 4px; }
.dk-txt { color: #d6d6d6; font-weight: 700; font-size: 15px; line-height: 20px; }
.dk-bulb { width: 22px; height: 28px; margin-top: 10px; }
.zm-tray { width: 32px; height: 32px; margin-top: 5px; background: #2d8cff; border-radius: 9px; display: flex; align-items: center; justify-content: center; }
.zm-cam2 { width: 20px; height: 12px; }
.bt { width: 16px; height: 24px; margin-top: 3px; background: #5a5a5a; border-radius: 8px; display: flex; align-items: center; justify-content: center; }
.bt-ic { width: 10px; height: 20px; }
.dk-shield { width: 24px; height: 24px; margin-top: 4px; }
.dk-wifi { width: 16px; height: 14px; margin-top: 12px; }
.dk-bat { width: 22px; height: 24px; margin-top: 10px; }
.dk-clock { display: flex; flex-direction: column; margin-top: 1px; }
.dk-clock span { line-height: 20.500px; }
.dk-music { width: 24px; height: 22px; margin: 3px 0 5px; }

/* zoom shell */
.zoom { width: 1882px; height: 1080px; display: flex; flex-direction: column; }
.titlebar { height: 32px; background: #000; display: flex; align-items: center; padding-left: 8px; flex: none; }
.dot { width: 18px; height: 18px; border-radius: 50%; margin-right: 11px; }
.dot-r { background: #f0535e; }
.dot-g { background: #22c93d; }
.dot-y { background: #f2b534; }
.title { margin: 0 0 0 827px; font-size: 18px; font-weight: 600; color: #fff; line-height: 32px; white-space: nowrap; }

.gallery { height: 121px; flex: none; background: #1a1a1a; padding: 10px 0 0 72px; display: flex; gap: 6px; }
.tile { width: 200px; height: 111px; background: #232323; border-radius: 6px; position: relative; display: flex; align-items: center; justify-content: center; flex: none; }
.tile-name { color: #f0f0f0; font-weight: 700; font-size: 16px; letter-spacing: .5px; white-space: nowrap; margin-top: -2px; }
.pill { position: absolute; left: 4px; top: 87px; height: 23px; padding: 0 8px 2px 8px; background: rgba(20,20,20,.88); border-radius: 6px; display: flex; align-items: center; gap: 5px; color: #cfcfcf; font-size: 14.500px; letter-spacing: .25px; white-space: nowrap; }
.pill-mic { width: 15px; height: 17px; flex: none; margin-left: -2px; }
.avatar { width: 79px; height: 79px; color: #fff; font-size: 40px; display: flex; align-items: center; justify-content: center; font-family: "Lato", sans-serif; }
.av-c { background: #0098a8; }
.av-l { background: #c0390d; }
.next { width: 32px; height: 32px; border-radius: 50%; background: #0e6fe0; border: 2px solid #fff; margin: 40px 0 0 20px; display: flex; align-items: center; justify-content: center; flex: none; }
.next-ic { width: 10px; height: 18px; }
.viewbtn { width: 62px; height: 30px; margin: -2px 0 0 34px; background: #242424; border-radius: 6px; display: flex; align-items: center; justify-content: center; gap: 5px; color: #d8d8d8; font-size: 13px; flex: none; }
.view-ic { width: 11px; height: 14px; }

.stage { flex: 1; position: relative; padding: 7px 0 0 123px; min-height: 0; }
.rec { position: absolute; left: 6px; top: 15px; z-index: 3; display: flex; align-items: center; color: #f0f0f0; font-size: 13px; }
.rec-shield { width: 22px; height: 24px; background: #141414; border-radius: 3px; display: flex; align-items: center; justify-content: center; }
.rec-sh { width: 13px; height: 15px; }
.rec-dot { width: 12px; height: 12px; background: #d8484c; border-radius: 50%; margin-left: 20px; }
.rec-t { margin-left: 11px; }
.banner { position: absolute; left: 432px; top: 3px; z-index: 3; height: 22px; display: flex; font-size: 11.650px; line-height: 22px; }
.banner-msg { width: 266px; background: #22d955; color: #0c2a15; text-align: center; white-space: nowrap; }
.banner-opt { width: 106px; background: #1f1f1f; color: #fff; border-radius: 0 3px 3px 0; display: flex; align-items: center; justify-content: center; gap: 5px; white-space: nowrap; }
.banner-ch { width: 9px; height: 6px; }

/* word */
.word { width: 1635px; height: 867px; display: flex; flex-direction: column; font-family: "Liberation Sans", sans-serif; }
.w-title { height: 22px; flex: none; background: #68a9f2; display: flex; align-items: center; position: relative; color: #3d5f8c; }
.orb { position: absolute; left: 3px; top: 2px; width: 32px; height: 32px; border-radius: 50%; z-index: 2; background: #f0f3f6; border: 1px solid #b7c7d8; display: grid; grid-template-columns: 9px 9px; grid-auto-rows: 9px; gap: 1px; padding: 5px 6px; justify-content: center; align-content: center; }
.orb-q { display: block; }
.q1 { background: #d8462a; }
.q2 { background: #3e9a46; }
.q3 { background: #3f74c0; }
.q4 { background: #eebb32; }
.qat { margin-left: 38px; width: 75px; height: 15px; border-radius: 7px 9px 9px 7px; background: #8ebcf0; border: 1px solid #76a6dc; display: flex; align-items: center; gap: 7px; padding-left: 8px; font-size: 10px; color: #7ba0cc; }
.qat-save { width: 11px; height: 11px; }
.qat-more { margin-left: 6px; font-size: 8px; color: #3d5f8c; }
.w-name { margin-left: 611px; font-size: 12.700px; color: #3d5f8c; white-space: nowrap; }
.w-min { width: 8px; height: 2px; background: #2a3f5e; margin: 6px 0 0 645px; }
.w-max { width: 8px; height: 11px; border: 1px solid #2a3f5e; border-top-width: 2px; margin-left: 14px; }
.w-close { width: 38px; height: 16px; margin: -6px 0 0 9px; background: #c85450; color: #fff; font-size: 11px; font-weight: 700; text-align: center; line-height: 15px; }
.w-tabs { height: 21px; flex: none; background: #bcd9fc; display: flex; align-items: center; position: relative; font-size: 9.500px; color: #3e5f8a; }
.tab { white-space: nowrap; }
.tab-on { margin-left: 42px; width: 44px; height: 21px; line-height: 21px; text-align: center; background: linear-gradient(#f6faff,#dbe9fa); border: 1px solid #a7c0de; border-bottom: 0; border-radius: 3px 3px 0 0; }
.t-ins { margin-left: 14px; }
.t-pl { margin-left: 26px; }
.t-ref { margin-left: 25px; }
.t-mail { margin-left: 25px; }
.t-rev { margin-left: 25px; }
.t-view { margin-left: 24px; }
.ctx { margin-left: 16px; width: 106px; height: 27px; margin-top: -6px; border: solid #a9c6e6; border-width: 0 1px; display: flex; align-items: flex-end; justify-content: center; gap: 25px; padding-bottom: 4px; background: linear-gradient(#cdd9a8 0, #bcd9fc 5px); }
.help { position: absolute; right: 4px; top: 4px; width: 12px; height: 13px; border-radius: 50%; background: #3a6fb5; border: 1px solid #fff; color: #fff; font-size: 9px; font-weight: 700; text-align: center; line-height: 11px; }
.ribbon { height: 74px; flex: none; background: linear-gradient(#bcd8fb,#aacbf0); padding: 3px 0 0 3px; display: flex; }
.grp { height: 71px; background: linear-gradient(#c9dff8,#c3daf5 75%); border-radius: 3px; display: flex; flex-direction: column; border: 1px solid #b9d1ec; flex: none; }
.g-clip { width: 129px; margin-right: 3px; }
.g-font { width: 223px; margin-right: 3px; }
.g-para { width: 177px; margin-right: 4px; }
.g-styles { width: 980px; margin-right: 5px; }
.g-edit { width: 62px; }
.grp-body { flex: 1; min-height: 0; }
.grp-label { height: 14px; flex: none; background: #bdd5f0; color: #5d81ac; font-size: 10px; line-height: 13px; text-align: center; position: relative; padding-right: 16px; }
.g-edit .grp-label { padding-right: 0; }
.launch { position: absolute; right: 3px; top: 3px; width: 7px; height: 7px; border: 1px solid #7e9ac0; }
.clip { display: flex; padding: 1px 0 0 9px; }
.paste { width: 26px; display: flex; flex-direction: column; align-items: center; color: #4e6f9a; font-size: 10px; }
.paste-ic { width: 24px; height: 29px; }
.paste-t { margin-top: 0; line-height: 12px; }
.paste-a { font-size: 7px; line-height: 8px; }
.clip-list { margin-left: 7px; padding-top: 0; }
.ci { display: flex; align-items: center; height: 18.500px; font-size: 9.500px; color: #4a6d9a; white-space: nowrap; gap: 3px; }
.ci-ic { width: 13px; height: 14px; flex: none; }
.tworow { padding: 7px 0 0 3px; display: flex; flex-direction: column; gap: 7px; }
.g-para .tworow { padding-left: 2px; }
.row { display: flex; height: 18px; align-items: stretch; }
.combo { height: 18px; background: #eaf2fc; border: 1px solid #b6cbe4; font-size: 10px; line-height: 16px; padding-left: 3px; color: #333; position: relative; white-space: nowrap; }
.combo b { position: absolute; right: 4px; top: 0; font-weight: 400; font-size: 7px; color: #55708f; }
.c-font { width: 115px; }
.c-size { width: 36px; margin-right: 3px; font-size: 11px; }
.set { display: flex; align-items: center; height: 18px; background: linear-gradient(#e6f0fb,#c9dcf4); border: 1px solid #a9c2df; border-radius: 2px; color: #2c3a4c; flex: none; }
.s-grow { width: 37px; margin-right: 4px; }
.s-clear { width: 19px; }
.s-fmt { width: 155px; margin-right: 4px; }
.s-col { width: 55px; }
.gl { display: block; text-align: center; font-family: "Liberation Serif", serif; font-size: 11px; line-height: 16px; }
.gl sub, .gl sup { font-size: 6px; line-height: 0; }
.gl-a { width: 18px; font-weight: 700; font-size: 13px; }
.gl-a2 { width: 17px; font-weight: 700; font-size: 10px; }
.gl-clear { width: 17px; font-size: 9px; color: #555; }
.gl-clear i { display: inline-block; width: 7px; height: 5px; background: #e8c4d0; border: 1px solid #666; }
.gl-b { width: 18px; font-weight: 700; font-size: 12px; }
.gl-i { width: 20px; font-style: italic; font-size: 12px; }
.gl-u { width: 20px; text-decoration: underline; font-weight: 700; }
.gl-ar { width: 11px; font-size: 7px; color: #55708f; }
.gl-s { width: 21px; text-decoration: line-through; font-size: 10px; font-weight: 700; }
.gl-x { width: 20px; font-weight: 700; font-family: "Liberation Sans", sans-serif; }
.gl-aa { width: 24px; font-size: 12px; }
.gl-aa small { font-size: 6px; color: #55708f; }
.gl-hi { width: 16px; font-size: 9px; border-bottom: 3px solid #f7e600; line-height: 12px; }
.gl-fc { width: 16px; margin-left: 1px; font-size: 12px; font-family: "Liberation Sans", sans-serif; border-bottom: 3px solid #e00; line-height: 12px; }
.ic { width: 14px; height: 12px; margin-left: 2px; flex: none; }
.ar { width: 8px; font-size: 7px; font-weight: 400; color: #55708f; text-align: center; }
.s-list { width: 85px; padding-left: 1px; margin-right: 3px; }
.s-list .ic { margin-left: 3px; }
.s-list .ar { margin-right: 4px; }
.s-ind { width: 38px; padding-left: 0; margin-right: 2px; }
.s-ind .ic { margin-left: 3px; }
.s-one { width: 21px; justify-content: center; margin-right: 3px; }
.s-one .ic { height: 15px; margin: 0; }
.s-pil { width: 20px; margin-right: 0; }
.pil { font-weight: 700; font-size: 13px; }
.s-al { width: 79px; padding-left: 0; margin-right: 3px; }
.s-al .ic { margin: 0 2px 0 3px; }
.s-ls { width: 27px; padding-left: 0; margin-right: 4px; }
.s-bd { width: 55px; padding-left: 0; }
.ic-hot { width: 16px; height: 16px; }
.styles { display: flex; padding: 8px 0 0 5px; gap: 6.400px; position: relative; }
.st { width: 55px; height: 42px; background: #fff; display: flex; flex-direction: column; align-items: center; overflow: hidden; flex: none; color: #111; border: 1px solid #edf3fa; }
.st-on { height: 46px; margin-top: -2px; border: 2px solid #efb453; background: linear-gradient(#fffbe9,#fff); width: 60px; margin-left: -2px; margin-right: -3px; }
.sm { height: 24px; line-height: 24px; font-family: "Lato", sans-serif; font-size: 12.500px; white-space: nowrap; }
.sm-serif { font-family: "Liberation Serif", serif; font-size: 12.500px; }
.sm-it { font-style: italic; }
.sm-nar { font-size: 11.500px; }
.sm-h1 { font-size: 15.500px; color: #3f6fae; }
.sm-h2 { font-size: 14px; color: #4f81bd; }
.sm-h6 { font-style: italic; color: #5a7590; }
.sm-title { font-size: 25px; color: #333f4f; font-weight: 300; line-height: 22px; }
.sm-sub { font-style: italic; color: #8ea6c4; }
.sm-se { font-style: italic; color: #808080; }
.sm-em { font-style: italic; }
.sm-ie { font-style: italic; font-weight: 700; color: #4f81bd; }
.sm-str { font-weight: 700; }
.sn { font-size: 10px; line-height: 14px; color: #39577c; white-space: nowrap; }
.gal-sb { width: 13px; height: 46px; margin: -1px 0 0 -3px; flex: none; display: flex; flex-direction: column; background: #d5e4f6; border: 1px solid #b4cbe6; font-size: 7px; line-height: 14.500px; text-align: center; color: #5a7699; }
.chg { width: 36px; margin: -4px 0 0 -1px; display: flex; flex-direction: column; align-items: center; color: #4a6d9a; font-size: 10px; line-height: 12px; white-space: nowrap; flex: none; }
.chg-ic { width: 28px; height: 30px; margin-bottom: 2px; }
.edit { padding: 0 0 0 5px; }
.edit .ci { height: 18.500px; }
.rep { font-size: 7px; line-height: 7px; width: 13px; color: #3a5b86; }

.docarea { flex: 1; min-height: 0; display: flex; background: linear-gradient(#a8c9f0 0,#8fb2e0 30%,#5a7db2 82%,#678fcc 100%); overflow: hidden; }
.pages { flex: 1; display: grid; grid-template-columns: 675px 675px; grid-template-rows: 644px auto; column-gap: 15px; row-gap: 13px; padding: 7px 0 0 129px; align-content: start; overflow: hidden; }
.vscroll { width: 15px; flex: none; background: #a9c8ee; display: flex; flex-direction: column; align-items: center; }
.page { background: #fff; box-shadow: 0 0 2px #44597a; display: flex; flex-direction: column; position: relative; font-family: "Lato", "Liberation Sans", sans-serif; font-size: 10.550px; color: #2d2d2d; filter: blur(.3px); }
.page-1 { padding: 1px 81px 41px 123px; }
.jst { text-align: justify; }
.bul { margin: 0; padding: 0 0 0 41px; line-height: 14.300px; }
.bul li { list-style: none; position: relative; }
.bul li::before { content: ""; position: absolute; left: -20px; top: 5px; width: 4px; height: 4px; border-radius: 50%; background: #111; }
.sp { text-decoration: underline wavy #d33; text-decoration-thickness: 1px; text-underline-offset: 1px; }
.hd { font-size: 10.500px; font-weight: 700; margin: 0; position: relative; line-height: 14.300px; color: #1c1c1c; }
.hd u { text-decoration-thickness: 1px; }
.hd-n { position: absolute; left: -20px; }
.hd-u { margin-top: 13px; }
.hd-b { margin-top: 15.500px; }
.clo { margin-top: 10.500px; line-height: 20.900px; }
.clo p { margin: 0; }
.clo b, .books b { color: #1c1c1c; }
.mat { border-collapse: collapse; table-layout: fixed; width: 478px; margin: 16px 0 0 -24px; font-family: "Liberation Serif", serif; font-size: 11px; line-height: 14.700px; color: #222; }
.mat th, .mat td { border: 1px solid #222; padding: 0 0 0 6px; vertical-align: top; text-align: left; }
.mat th { font-weight: 700; white-space: normal; }
.m0 { width: 60px; }
.m1 { width: 33.400px; }
.m2 { width: 39px; }
.mh { height: 52px; }
.mr { height: 22.250px; }
.books { line-height: 15.900px; }
.books p { margin: 0; }
.pf { margin-top: auto; display: flex; position: absolute; left: 84px; right: 40px; top: 579px; height: 24px; }
.pf-t { flex: 1; border-top: 2px solid #9b9b9b; color: #9c9c9c; font-size: 10px; letter-spacing: .2px; line-height: 19px; white-space: nowrap; }
.pf-n { width: 90px; background: #808080; color: #fff; font-size: 10px; line-height: 20px; text-align: center; }
.page-2 { padding: 10px 0 0 116px; }
.move { position: absolute; left: 106px; top: 1px; width: 10px; height: 10px; border: 1px solid #aabbd0; font-size: 9px; line-height: 8px; text-align: center; color: #3a5f95; background: #fff; }
.lec { border-collapse: collapse; table-layout: fixed; width: 469px; line-height: 13.400px; color: #2d2d2d; }
.l0 { width: 162px; }
.lec th, .lec td { border: 1px solid #222; padding: .5px 0 0; vertical-align: top; }
.lec td + td { padding-left: 6.500px; }
.lec td:first-child { text-align: center; }
.lec th { font-weight: 700; color: #1c1c1c; }
.lh th { vertical-align: middle; }
.jline { display: block; text-align: justify; text-align-last: justify; padding-right: 3px; height: 13.400px; }
.jst2 br:first-of-type { display: none; }
.jst2 br:last-of-type { display: none; }
.h45 { height: 45px; }
.h42 { height: 42px; }
.h28 { height: 28px; }
.h23 { height: 23px; }
.h22 { height: 22px; }
.sel td { background: linear-gradient(#a8cbf0,#a8cbf0) no-repeat 0 1px / 100% 12px; }
.sel td:first-child { background-position: 7px 1px; }
.ibeam { position: absolute; left: 410px; top: 256px; width: 1px; height: 20px; background: #333; }
.ibeam::before, .ibeam::after { content: ""; position: absolute; left: -3px; width: 7px; height: 1px; background: #333; }
.ibeam::before { top: 0; }
.ibeam::after { bottom: 0; }
.page-n { height: 100px; padding: 34px 0 0 82px; flex-direction: row; }
.cp { width: 411px; height: 30px; background: #808080; padding-left: 9px; }
.cp-t { font-family: "Liberation Serif", serif; font-weight: 700; font-size: 16px; line-height: 31px; color: #f2f2f2; }
.ck { margin: -2px 0 0 9px; display: flex; gap: 3px; height: 30px; }
.ck-t { display: flex; flex-direction: column; align-items: flex-end; width: 58px; color: #777; padding-top: 9px; }
.ck-t b { font-family: "Liberation Sans", sans-serif; font-size: 13.500px; line-height: 14px; transform: scaleX(.8); transform-origin: right center; }
.ck-t i { font-family: "Liberation Serif", serif; font-style: normal; font-size: 9px; line-height: 9px; color: #aaa; letter-spacing: .3px; }
.ck-ic { width: 29px; height: 29px; }
.vs-split { width: 9px; height: 1px; background: #3c5270; margin-top: 6px; flex: none; }
.vs-rul { width: 11px; height: 8px; margin-top: 4px; flex: none; }
.vs-track { width: 14px; flex: 1; margin-top: 5px; display: flex; flex-direction: column; align-items: center; background: linear-gradient(90deg,#8fa9cf,#7c99c4); }
.vs-up { height: 16px; flex: none; font-size: 9px; line-height: 16px; color: #5a6e8a; }
.vs-thumb { width: 13px; height: 111px; margin-top: 47px; flex: none; background: linear-gradient(90deg,#dce4ef,#f2f5f9 50%,#c8d2df); border: 1px solid #5a7296; display: flex; align-items: center; justify-content: center; }
.vs-thumb i { width: 7px; height: 5px; border: solid #8592a3; border-width: 1px 0; }
.vs-grow { flex: 1; }
.vs-nav { height: 44px; width: 15px; flex: none; background: #a9c8ee; display: flex; flex-direction: column; align-items: center; justify-content: space-around; font-size: 6px; color: #222; padding: 1px 0 3px; }
.nv-o { width: 7px; height: 7px; border-radius: 50%; background: #aab4c2; border: 1px solid #333; }

.sharebar { position: absolute; left: 793px; bottom: 0; width: 296px; height: 25px; z-index: 3; background: #fff; border: 1px solid #dfe3e8; border-bottom: 0; display: flex; align-items: flex-end; font-family: "Liberation Sans", sans-serif; font-size: 10.200px; color: #444; }
.sb-pause { width: 5px; height: 9px; margin: 0 0 6px 9px; border: solid #bbb; border-width: 0 1px; }
.sb-msg { width: 144px; margin-left: 8px; line-height: 18px; white-space: nowrap; }
.sb-stop { width: 85px; height: 21px; margin-left: 5px; background: #1a74e0; color: #fff; border-radius: 3px 3px 0 0; text-align: center; line-height: 22px; font-weight: 700; font-size: 10px; }
.sb-hide { margin-left: 9px; line-height: 18px; color: #7f8fe0; }

/* toolbar */
.toolbar { height: 53px; flex: none; background: #232529; display: flex; padding-left: 11px; }
.tool { position: relative; display: flex; flex-direction: column; align-items: center; padding-top: 5px; color: #9b9da2; font-size: 13px; line-height: 17px; white-space: nowrap; flex: none; }
.t-ic { width: 24px; height: 24px; margin-bottom: 2px; }
.t-ic-w { width: 26px; height: 24px; }
.t-unmute { width: 80px; }
.t-video { width: 86px; }
.t-part { width: 100px; margin-left: 624px; }
.t-chat { width: 88px; margin-left: 10px; }
.t-share { width: 90px; color: #21d653; }
.t-hand { width: 100px; }
.t-ch { position: absolute; left: 63px; top: 13px; width: 10px; height: 6px; }
.t-ch-v { left: 70px; }
.t-ch-p { left: 98px; }
.cnt { position: absolute; left: 65px; top: 8px; font-size: 14px; }
.t-part .t-ic { margin-left: -2px; }
.leave { margin: 13px 12px 0 auto; width: 78px; height: 28px; border-radius: 5px; background: #e0282e; color: #fff; font-weight: 700; font-size: 13.500px; text-align: center; line-height: 27px; }
```
